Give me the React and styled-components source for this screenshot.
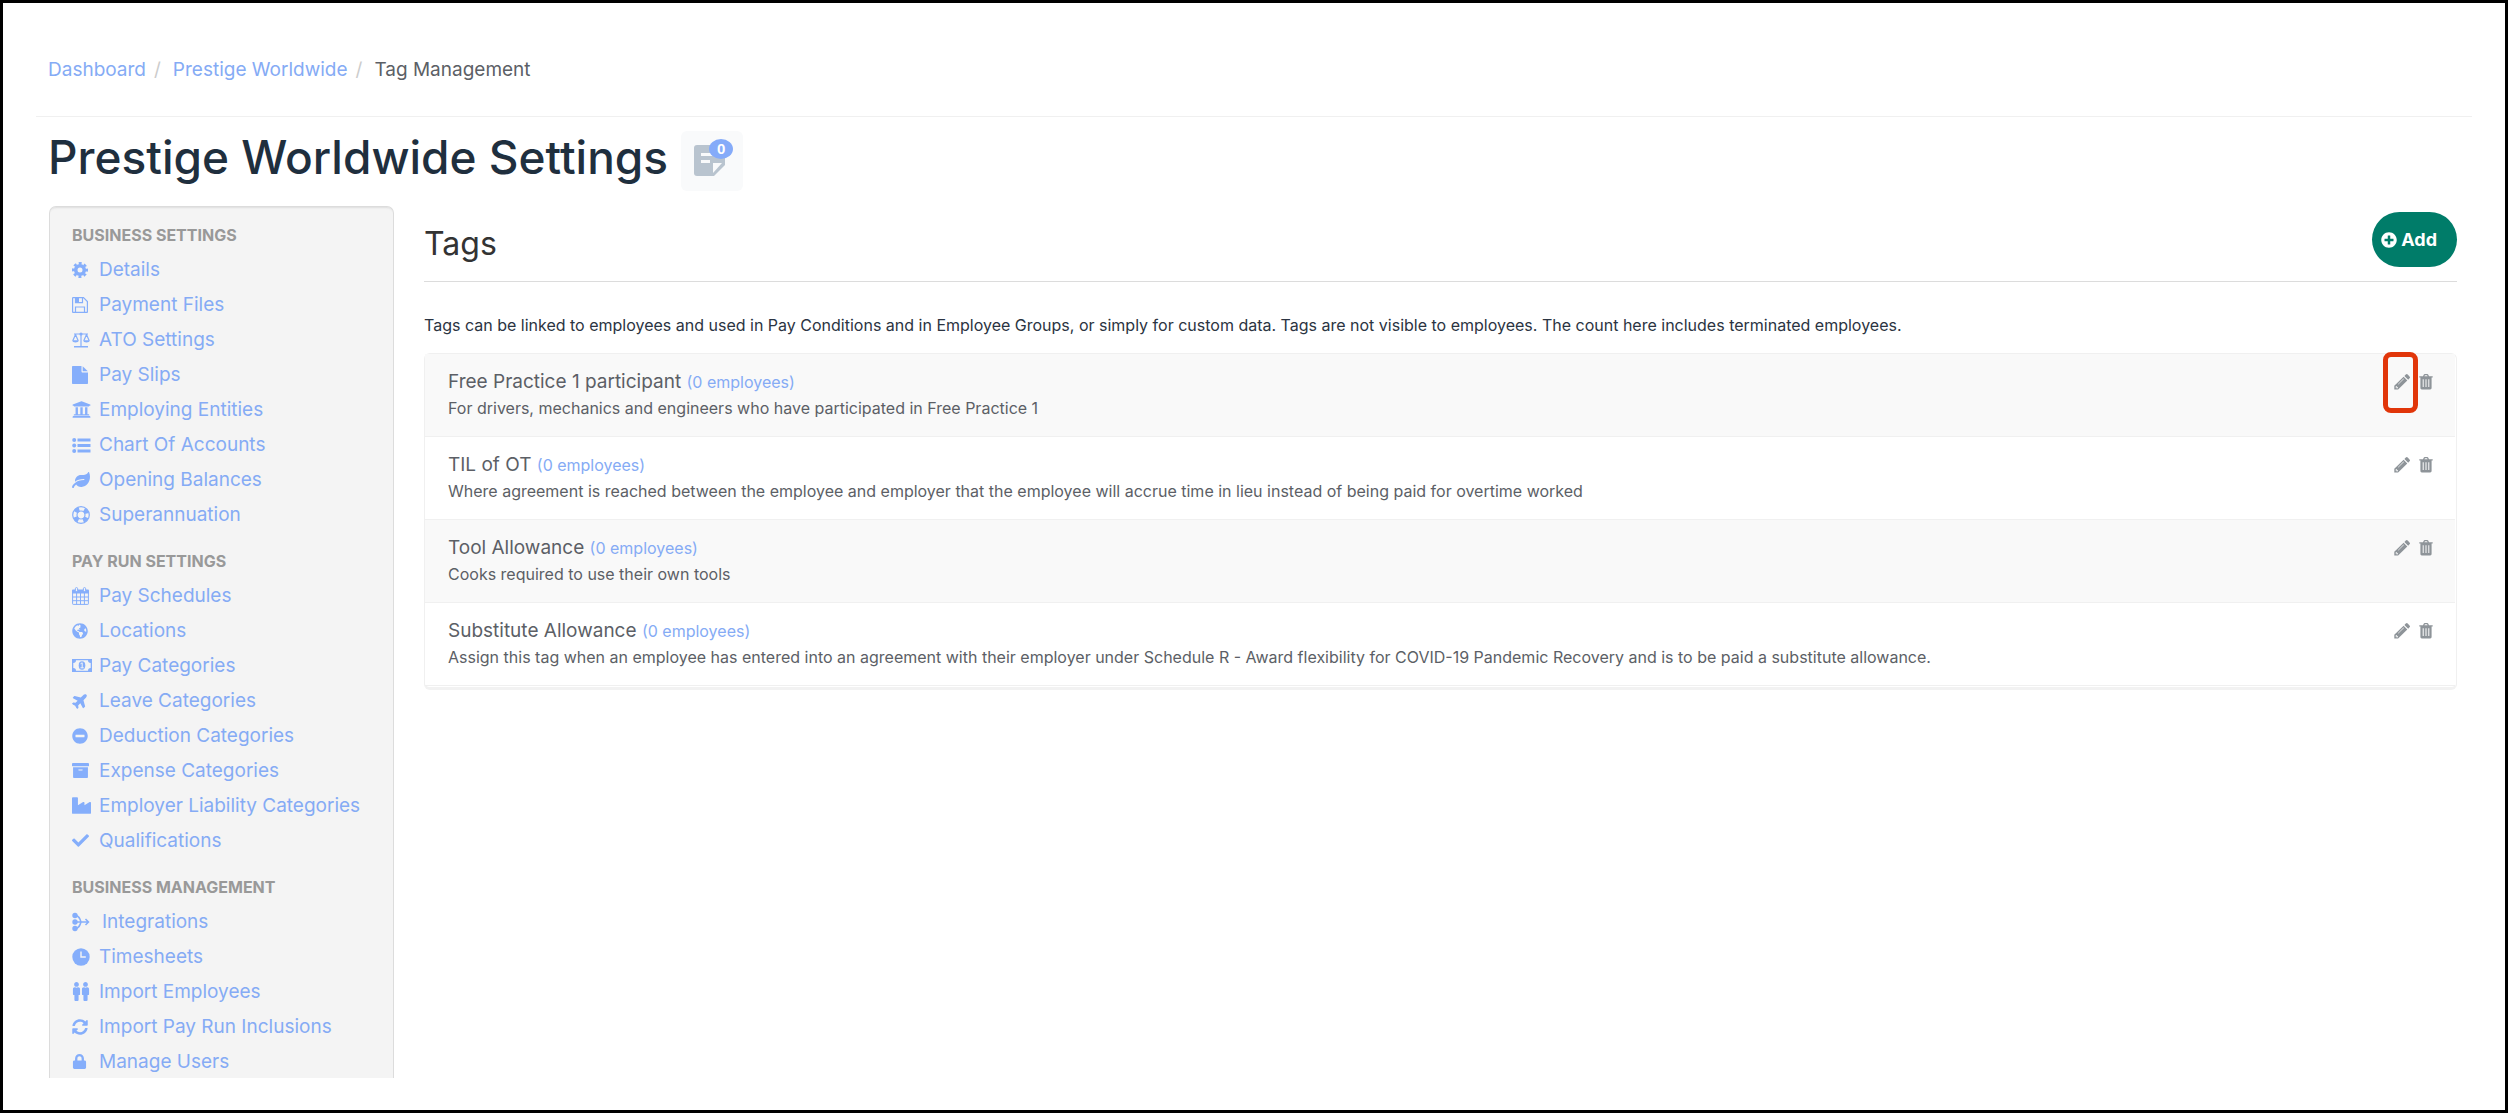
import React from 'react'
import styled, { createGlobalStyle } from 'styled-components'
import {
  FaUniversity,
  FaLeaf,
  FaGlobeAmericas,
  FaPlane,
  FaMinusCircle,
  FaArchive,
  FaIndustry,
  FaCheck,
  FaMale,
  FaSyncAlt,
  FaLock,
  FaPlusCircle,
} from 'react-icons/fa'

const GlobalStyle = createGlobalStyle`
  * {
    box-sizing: border-box;
  }

  body {
    margin: 0;
    background: #fff;
    color: #5c5f66;
    font-family: Inter, 'Liberation Sans', sans-serif;
    font-size: 19px;
  }

  h1, h2, h3, p, ul, ol {
    margin: 0;
    padding: 0;
  }

  ul, ol {
    list-style: none;
  }

  a {
    color: #85abf5;
    text-decoration: none;
  }
`

const Page = styled.div`
  display: flex;
  flex-direction: column;
  height: 100vh;
  border: 3px solid #000;
  padding: 0 33px 32px;
  overflow: hidden;
`

const Breadcrumb = styled.ol`
  display: flex;
  align-items: center;
  flex-shrink: 0;
  padding: 54px 12px 34px;
  border-bottom: 1px solid #f0f0f0;
  line-height: 25px;

  li + li::before {
    content: '/';
    padding: 0 12px 0 8px;
    color: #ccc;
  }
`

const Header = styled.header`
  display: flex;
  align-items: flex-start;
  gap: 13px;
  flex-shrink: 0;
  height: 89px;
  padding: 10px 12px 0;

  h1 {
    color: #1f2f3e;
    font-size: 46px;
    font-weight: 500;
    line-height: 60px;
  }
`

const NoteButton = styled.button`
  position: relative;
  width: 62px;
  height: 60px;
  margin-top: 4px;
  padding: 0;
  border: 0;
  border-radius: 6px;
  background: #f9fafb;

  svg {
    display: block;
    margin: 0 auto 2px 13px;
  }
`

const NoteCount = styled.span`
  position: absolute;
  top: 8px;
  left: 28px;
  width: 24px;
  height: 20px;
  border-radius: 50%;
  background: #85abf9;
  color: #fff;
  font-size: 15px;
  font-weight: 600;
  line-height: 20px;
`

const Body = styled.div`
  display: flex;
  flex: 1;
  gap: 30px;
  min-height: 0;
  padding: 0 15px 0 13px;
`

const Sidebar = styled.nav`
  width: 345px;
  flex-shrink: 0;
  padding: 12px 22px 0;
  overflow: hidden;
  border: 1px solid #dcdcdc;
  border-bottom: 0;
  border-radius: 7px 7px 0 0;
  background: #f4f4f4;
  box-shadow: inset 0 3px 2px -2px #ddd;
`

const SideHeading = styled.h3`
  color: #999;
  font-size: 16px;
  font-weight: 700;
  line-height: 33px;
`

const SideList = styled.ul`
  margin-bottom: 13px;
`

const SideLink = styled.a`
  display: flex;
  align-items: center;
  height: 35px;
  white-space: nowrap;
`

const SideIcon = styled.span`
  display: flex;
  width: ${({ $wide }) => ($wide ? '30px' : '27px')};
  flex-shrink: 0;
  color: #85aefb;
`

const Main = styled.main`
  flex: 1;
  min-width: 0;
`

const MainHeader = styled.div`
  display: flex;
  align-items: center;
  justify-content: space-between;
  height: 76px;
  border-bottom: 1px solid #dcdcdc;

  h2 {
    color: #333;
    font-size: 32px;
    font-weight: 400;
  }
`

const AddButton = styled.button`
  display: flex;
  align-items: center;
  gap: 4px;
  height: 55px;
  margin-bottom: 8px;
  padding: 0 20px 0 9px;
  border: 0;
  border-radius: 28px;
  background: #007c69;
  color: #fff;
  font-family: inherit;
  font-size: 18px;
  font-weight: 700;
`

const Intro = styled.p`
  padding: 31px 0 16px;
  color: #2b3442;
  font-size: 16px;
  line-height: 24px;
`

const TagList = styled.ul`
  padding: 0 1px 1px 0;
  border: 1px solid #f0f0f0;
  border-bottom: 3px solid #f2f2f2;
  border-radius: 6px;
`

const TagRow = styled.li`
  display: flex;
  justify-content: space-between;
  height: 83px;
  padding: 15px 22px 0 23px;
  border-bottom: 1px solid #f0f0f0;

  &:nth-child(odd) {
    background: #f9f9f9;
  }
`

const TagName = styled.div`
  line-height: 26px;

  a {
    font-size: 16px;
  }
`

const TagText = styled.p`
  font-size: 16px;
  line-height: 26px;
`

const TagActions = styled.div`
  display: flex;
  align-items: flex-start;
  gap: 9px;
  padding-top: 5px;
`

const IconButton = styled.button`
  position: relative;
  display: flex;
  padding: 0;
  border: 0;
  background: none;
  color: #8e9499;
`

const Highlight = styled.span`
  position: absolute;
  top: -22px;
  left: -11px;
  width: 35px;
  height: 61px;
  border: 5px solid #e1360a;
  border-radius: 8px;
`

const PlaneIcon = styled(FaPlane)`
  transform: rotate(-45deg);
`

const PersonIcon = styled(FaMale)`
  width: 9px;
  height: 19px;
`

const NoteIcon = () => (
  <svg width="31" height="31" viewBox="0 0 31 31">
    <path fill="#b9c4cf" d="M3 0h25a3 3 0 0 1 3 3v17L20 31H3a3 3 0 0 1-3-3V3a3 3 0 0 1 3-3z" />
    <path fill="#f9fafb" d="M19 18h9l-9 10z" />
    <path stroke="#f9fafb" strokeWidth="3" d="M7 9.500h12M7 16.500h9" />
  </svg>
)

const PencilIcon = () => (
  <svg width="16" height="16" viewBox="0 0 16 16" fill="currentColor">
    <path
      fillRule="evenodd"
      d="M9.600 2.700l3.700 3.700-9.200 9.200H.3v-3.800zM1.600 12.700v.7h1v1h.8l.7-.7-1.800-1.700zM9.500 4.600L3.900 10.200l.4.4 5.600-5.600z"
    />
    <path d="M10.400 1.900L11.800.6a1.300 1.300 0 0 1 1.900 0l1.800 1.800a1.300 1.300 0 0 1 0 1.900l-1.300 1.400z" />
  </svg>
)

const TrashIcon = () => (
  <svg width="14" height="16" viewBox="0 0 14 16" fill="currentColor">
    <path
      fillRule="evenodd"
      d="M4 2.300L4.700.7C4.900.3 5.300 0 5.800 0h2.400c.5 0 .9.300 1.100.7l.7 1.600h3.700v1.200h-1.100v10.300c0 1-.6 1.700-1.400 1.700H2.800c-.8 0-1.400-.7-1.400-1.700V3.500H.3V2.300zM5.400 2.300h3.200L8 1.200H6zM3.700 5.200v7.800h1V5.200zM6.500 5.200v7.800h1V5.200zM9.300 5.200v7.800h1V5.200z"
    />
  </svg>
)

const CogIcon = () => (
  <svg width="16" height="16" viewBox="0 0 16 16" fill="none" stroke="currentColor">
    <circle cx="8" cy="8" r="4.300" strokeWidth="3.600" />
    <circle cx="8" cy="8" r="6.700" strokeWidth="2.600" strokeDasharray="2.900 2.360" strokeDashoffset="1.450" />
  </svg>
)

const SaveIcon = () => (
  <svg width="16" height="16" viewBox="0 0 16 16" fill="none" stroke="currentColor" strokeWidth="1.200">
    <path d="M.6 1.200a.6.6 0 0 1 .6-.6h10.300l3.900 3.900v10.300a.6.6 0 0 1-.6.600H1.200a.6.6 0 0 1-.6-.6z" />
    <path d="M3.500 15.400V10h9v5.400M3.500.6v5h7v-5" />
    <path fill="currentColor" stroke="none" d="M3.500 1H7v4.500H3.500z" />
  </svg>
)

const ScaleIcon = () => (
  <svg width="18" height="16" viewBox="0 0 18 16" fill="none" stroke="currentColor">
    <path strokeWidth="1.200" d="M2 2h14M9 1v13M3.500 2.500L.9 8.500M3.500 2.500l2.600 6M14.500 2.500l-2.600 6M14.500 2.500l2.600 6" />
    <path fill="currentColor" stroke="none" d="M.2 8.200h6.600c0 3-6.600 3-6.600 0zM11.200 8.200h6.600c0 3-6.600 3-6.600 0zM2 14h14v1.500H2z" />
    <circle cx="9" cy="2" r="1.600" fill="currentColor" stroke="none" />
  </svg>
)

const FileIcon = () => (
  <svg width="16" height="18" viewBox="0 0 16 18" fill="currentColor">
    <path d="M1 0h8.500v5.500c0 .5.400 1 1 1H16V17c0 .6-.4 1-1 1H1c-.6 0-1-.4-1-1V1c0-.6.4-1 1-1z" />
    <path d="M10.700.2L15.800 5.300h-5.100z" />
  </svg>
)

const ListIcon = () => (
  <svg width="19" height="16" viewBox="0 0 19 16" fill="currentColor">
    <circle cx="2.200" cy="3" r="2" />
    <circle cx="2.200" cy="8.500" r="2" />
    <circle cx="2.200" cy="14" r="2" />
    <path d="M5.500 1.500h13v3h-13zM5.500 7h13v3h-13zM5.500 12.500h13v3h-13z" />
  </svg>
)

const RingIcon = () => (
  <svg width="18" height="18" viewBox="0 0 18 18" fill="none" stroke="currentColor">
    <circle cx="9" cy="9" r="8.300" strokeWidth="1.200" />
    <circle cx="9" cy="9" r="4" strokeWidth="1.200" />
    <circle cx="9" cy="9" r="6" strokeWidth="4.500" strokeDasharray="4.400 5.020" strokeDashoffset="-2.500" />
  </svg>
)

const CalendarIcon = () => (
  <svg width="17" height="18" viewBox="0 0 17 18" fill="none" stroke="currentColor">
    <path d="M.6 6v10.800c0 .4.2.6.6.6h14.600c.4 0 .6-.2.6-.6V6M.6 10h15.800M.6 13.700h15.800M4.600 6v11.400M8.500 6v11.400M12.400 6v11.400" />
    <path fill="currentColor" stroke="none" d="M1.200 2.400h14.600c.7 0 1.200.5 1.200 1.200v2.900H0V3.600c0-.7.5-1.200 1.200-1.200z" />
    <rect x="3.400" y=".6" width="2.200" height="4" rx="1" fill="#f4f4f4" />
    <rect x="11.400" y=".6" width="2.200" height="4" rx="1" fill="#f4f4f4" />
  </svg>
)

const MoneyIcon = () => (
  <svg width="20" height="13" viewBox="0 0 20 13" fill="currentColor">
    <path
      fillRule="evenodd"
      d="M0 0h20v13H0zM4 1.300A2.700 2.700 0 0 1 1.300 4v5A2.700 2.700 0 0 1 4 11.700h12A2.700 2.700 0 0 1 18.700 9V4A2.700 2.700 0 0 1 16 1.300z"
    />
    <ellipse cx="10" cy="6.500" rx="3.300" ry="4.200" />
    <path stroke="#f4f4f4" fill="none" d="M8.500 4.800l1.700-1v5M8.500 8.800h3.200" />
  </svg>
)

const ClockIcon = () => (
  <svg width="18" height="18" viewBox="0 0 18 18">
    <circle cx="9" cy="9" r="8.700" fill="currentColor" />
    <path fill="none" stroke="#f4f4f4" strokeWidth="1.400" d="M9 3.500V9h4.800" />
  </svg>
)

const MergeIcon = () => (
  <svg width="18" height="20" viewBox="0 0 18 20" fill="none" stroke="currentColor">
    <g fill="currentColor" stroke="none">
      <circle cx="3" cy="3.500" r="2.700" />
      <circle cx="3" cy="10" r="2.700" />
      <circle cx="3" cy="16.500" r="2.700" />
    </g>
    <path strokeWidth="1.500" d="M3 3.500c4 0 5 3 6 6.500-1 3.500-2 6.500-6 6.500M3 10h13.500M13.500 7l3 3-3 3" />
  </svg>
)

const PeopleIcon = () => (
  <>
    <PersonIcon />
    <PersonIcon />
  </>
)

const sections = [
  {
    title: 'BUSINESS SETTINGS',
    items: [
      { label: 'Details', icon: <CogIcon /> },
      { label: 'Payment Files', icon: <SaveIcon /> },
      { label: 'ATO Settings', icon: <ScaleIcon /> },
      { label: 'Pay Slips', icon: <FileIcon /> },
      { label: 'Employing Entities', icon: <FaUniversity size={19} /> },
      { label: 'Chart Of Accounts', icon: <ListIcon /> },
      { label: 'Opening Balances', icon: <FaLeaf size={18} /> },
      { label: 'Superannuation', icon: <RingIcon /> },
    ],
  },
  {
    title: 'PAY RUN SETTINGS',
    items: [
      { label: 'Pay Schedules', icon: <CalendarIcon /> },
      { label: 'Locations', icon: <FaGlobeAmericas size={16} /> },
      { label: 'Pay Categories', icon: <MoneyIcon /> },
      { label: 'Leave Categories', icon: <PlaneIcon size={17} /> },
      { label: 'Deduction Categories', icon: <FaMinusCircle size={16} /> },
      { label: 'Expense Categories', icon: <FaArchive size={17} /> },
      { label: 'Employer Liability Categories', icon: <FaIndustry size={19} /> },
      { label: 'Qualifications', icon: <FaCheck size={17} /> },
    ],
  },
  {
    title: 'BUSINESS MANAGEMENT',
    items: [
      { label: 'Integrations', icon: <MergeIcon />, wide: true },
      { label: 'Timesheets', icon: <ClockIcon /> },
      { label: 'Import Employees', icon: <PeopleIcon /> },
      { label: 'Import Pay Run Inclusions', icon: <FaSyncAlt size={16} /> },
      { label: 'Manage Users', icon: <FaLock size={15} /> },
    ],
  },
]

const tags = [
  {
    name: 'Free Practice 1 participant',
    text: 'For drivers, mechanics and engineers who have participated in Free Practice 1',
    highlighted: true,
  },
  {
    name: 'TIL of OT',
    text: 'Where agreement is reached between the employee and employer that the employee will accrue time in lieu instead of being paid for overtime worked',
  },
  {
    name: 'Tool Allowance',
    text: 'Cooks required to use their own tools',
  },
  {
    name: 'Substitute Allowance',
    text: 'Assign this tag when an employee has entered into an agreement with their employer under Schedule R - Award flexibility for COVID-19 Pandemic Recovery and is to be paid a substitute allowance.',
  },
]

const App = () => {
  return (
    <Page>
      <GlobalStyle />
      <Breadcrumb>
        <li>
          <a href="#dashboard">Dashboard</a>
        </li>
        <li>
          <a href="#business">Prestige Worldwide</a>
        </li>
        <li>Tag Management</li>
      </Breadcrumb>
      <Header>
        <h1>Prestige Worldwide Settings</h1>
        <NoteButton aria-label="Notes">
          <NoteIcon />
          <NoteCount>0</NoteCount>
        </NoteButton>
      </Header>
      <Body>
        <Sidebar>
          {sections.map(({ title, items }) => (
            <section key={title}>
              <SideHeading>{title}</SideHeading>
              <SideList>
                {items.map(({ label, icon, wide }) => (
                  <li key={label}>
                    <SideLink href="#settings">
                      <SideIcon $wide={wide}>{icon}</SideIcon>
                      {label}
                    </SideLink>
                  </li>
                ))}
              </SideList>
            </section>
          ))}
        </Sidebar>
        <Main>
          <MainHeader>
            <h2>Tags</h2>
            <AddButton>
              <FaPlusCircle size={16} />
              Add
            </AddButton>
          </MainHeader>
          <Intro>
            Tags can be linked to employees and used in Pay Conditions and in Employee Groups, or simply for custom
            data. Tags are not visible to employees. The count here includes terminated employees.
          </Intro>
          <TagList>
            {tags.map(({ name, text, highlighted }) => (
              <TagRow key={name}>
                <div>
                  <TagName>
                    {name} <a href="#employees">(0 employees)</a>
                  </TagName>
                  <TagText>{text}</TagText>
                </div>
                <TagActions>
                  <IconButton aria-label="Edit">
                    <PencilIcon />
                    {highlighted && <Highlight />}
                  </IconButton>
                  <IconButton aria-label="Delete">
                    <TrashIcon />
                  </IconButton>
                </TagActions>
              </TagRow>
            ))}
          </TagList>
        </Main>
      </Body>
    </Page>
  )
}

export default App
